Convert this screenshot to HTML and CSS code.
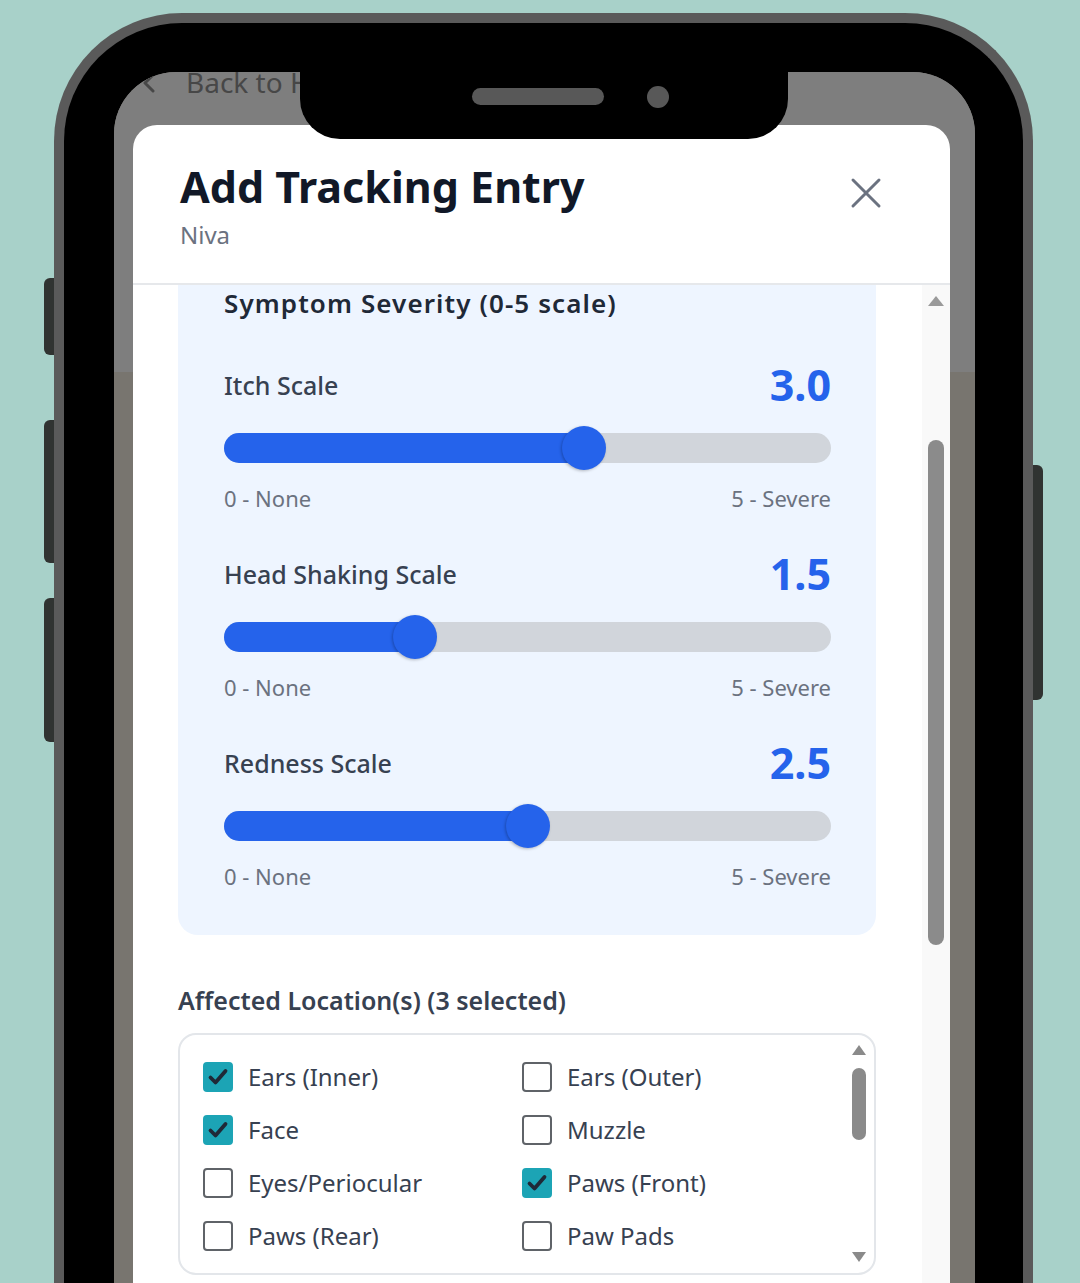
FILE: index.html
```html
<!DOCTYPE html>
<html lang="en">
<head>
<meta charset="utf-8">
<title>Add Tracking Entry</title>
<link rel="stylesheet" href="styles.css">
</head>
<body>
<div class="phone">
  <span class="side-btn left b1"></span>
  <span class="side-btn left b2"></span>
  <span class="side-btn left b3"></span>
  <span class="side-btn right b4"></span>
  <div class="screen">
    <div class="bg-page">
      <div class="bg-head">
        <div class="back">
          <svg class="chev" width="16" height="22" viewBox="0 0 16 22"><polyline points="12,3 4,11 12,19" fill="none" stroke="#474747" stroke-width="3" stroke-linecap="round" stroke-linejoin="round"/></svg>
          <span>Back to Home</span>
        </div>
      </div>
      <div class="bg-rest"></div>
    </div>

    <div class="modal">
      <header class="modal-head">
        <div class="head-text">
          <h1>Add Tracking Entry</h1>
          <p>Niva</p>
        </div>
        <button class="close" aria-label="Close">
          <svg width="36" height="36" viewBox="0 0 36 36"><path d="M5 5 L31 31 M31 5 L5 31" stroke="#6b7280" stroke-width="3" stroke-linecap="round" fill="none"/></svg>
        </button>
      </header>
      <div class="modal-body">
        <div class="content">
          <section class="severity">
            <h2>Symptom Severity (0-5 scale)</h2>
            <div class="sliders">
              <div class="slider">
                <div class="row"><span class="label">Itch Scale</span><span class="val">3.0</span></div>
                <div class="range" style="--v:0.6"><div class="track"><div class="fill"></div></div><span class="thumb"></span></div>
                <div class="ends"><span>0 - None</span><span>5 - Severe</span></div>
              </div>
              <div class="slider">
                <div class="row"><span class="label">Head Shaking Scale</span><span class="val">1.5</span></div>
                <div class="range" style="--v:0.3"><div class="track"><div class="fill"></div></div><span class="thumb"></span></div>
                <div class="ends"><span>0 - None</span><span>5 - Severe</span></div>
              </div>
              <div class="slider">
                <div class="row"><span class="label">Redness Scale</span><span class="val">2.5</span></div>
                <div class="range" style="--v:0.5"><div class="track"><div class="fill"></div></div><span class="thumb"></span></div>
                <div class="ends"><span>0 - None</span><span>5 - Severe</span></div>
              </div>
            </div>
          </section>

          <h3 class="loc-title">Affected Location(s) (3 selected)</h3>
          <div class="loc-box">
            <div class="loc-grid">
              <label class="opt"><span class="cb on"><svg width="30" height="30" viewBox="0 0 30 30"><path d="M7.5 15.5 L12.5 20.5 L22.5 9" fill="none" stroke="#1f2937" stroke-width="3.8" stroke-linecap="round" stroke-linejoin="round"/></svg></span>Ears (Inner)</label>
              <label class="opt"><span class="cb"></span>Ears (Outer)</label>
              <label class="opt"><span class="cb on"><svg width="30" height="30" viewBox="0 0 30 30"><path d="M7.5 15.5 L12.5 20.5 L22.5 9" fill="none" stroke="#1f2937" stroke-width="3.8" stroke-linecap="round" stroke-linejoin="round"/></svg></span>Face</label>
              <label class="opt"><span class="cb"></span>Muzzle</label>
              <label class="opt"><span class="cb"></span>Eyes/Periocular</label>
              <label class="opt"><span class="cb on"><svg width="30" height="30" viewBox="0 0 30 30"><path d="M7.5 15.5 L12.5 20.5 L22.5 9" fill="none" stroke="#1f2937" stroke-width="3.8" stroke-linecap="round" stroke-linejoin="round"/></svg></span>Paws (Front)</label>
              <label class="opt"><span class="cb"></span>Paws (Rear)</label>
              <label class="opt"><span class="cb"></span>Paw Pads</label>
            </div>
            <div class="mini-scroll">
              <span class="arr up"></span>
              <span class="mini-thumb"></span>
              <span class="arr down"></span>
            </div>
          </div>
        </div>
        <div class="scrollbar">
          <span class="arr up"></span>
          <span class="sb-thumb"></span>
        </div>
      </div>
    </div>

    <div class="notch"><span class="speaker"></span><span class="camera"></span></div>
  </div>
</div>
</body>
</html>
```
FILE: styles.css
```css
* { box-sizing: border-box; margin: 0; padding: 0; }
html, body { width: 1080px; height: 1283px; overflow: hidden; }
body {
  background: #a8d1c9;
  font-family: "Noto Sans", "Open Sans", sans-serif;
}

/* phone frame */
.phone {
  position: relative;
  margin: 13px 0 0 54px;
  width: 979px;
  height: 1400px;
  background: #000;
  border: 10px solid #5a5a5a;
  border-bottom: none;
  border-radius: 128px 128px 0 0;
  padding: 49px 48px 0 50px;
}
.side-btn { position: absolute; background: #303331; width: 10px; }
.side-btn.left { left: -20px; border-radius: 6px 0 0 6px; }
.side-btn.right { left: 969px; border-radius: 0 6px 6px 0; }
.b1 { top: 255px; height: 77px; }
.b2 { top: 397px; height: 143px; }
.b3 { top: 575px; height: 144px; }
.b4 { top: 442px; height: 235px; }

.screen {
  position: relative;
  height: 100%;
  border-radius: 62px 62px 0 0;
  overflow: hidden;
  background: #7a7773;
}

/* dimmed page behind the modal */
.bg-page { display: flex; flex-direction: column; height: 100%; }
.bg-head { height: 300px; background: #7e7e7e; }
.bg-rest { flex: 1; background: #78756f; }
.back {
  display: flex;
  align-items: center;
  padding-left: 27px;
  font-size: 28px;
  line-height: 20px;
  height: 20px;
  color: #474747;
  white-space: nowrap;
}
.chev { margin-right: 29px; margin-top: 2px; }

.notch {
  position: absolute;
  z-index: 2;
  left: 186px;
  top: 0;
  width: 488px;
  height: 67px;
  background: #000;
  border-radius: 0 0 40px 40px;
}
.speaker {
  position: absolute;
  left: 172px; top: 16px;
  width: 132px; height: 17px;
  border-radius: 9px;
  background: #585858;
}
.camera {
  position: absolute;
  left: 347px; top: 14px;
  width: 22px; height: 22px;
  border-radius: 50%;
  background: #585858;
}

/* modal */
.modal {
  position: absolute;
  left: 19px;
  top: 53px;
  width: 817px;
  bottom: 0;
  background: #fff;
  border-radius: 24px 24px 0 0;
  display: flex;
  flex-direction: column;
}
.modal-head {
  display: flex;
  justify-content: space-between;
  align-items: flex-start;
  padding: 38px 66px 33px 47px;
  border-bottom: 2px solid #e6e8eb;
}
.modal-head h1 {
  font-size: 43px;
  line-height: 48px;
  font-weight: 700;
  color: #111827;
}
.modal-head p {
  margin-top: 9px;
  font-size: 24px;
  line-height: 30px;
  color: #6b7280;
}
.close {
  margin-top: 12px;
  width: 36px;
  height: 36px;
  border: none;
  background: none;
  display: block;
}
.close svg { display: block; }

.modal-body {
  flex: 1;
  display: flex;
  overflow: hidden;
}
.content {
  margin-left: 45px;
  margin-top: -30px;
  width: 698px;
  flex: none;
}
.scrollbar {
  margin-left: auto;
  width: 28px;
  background: #f9f9f9;
  display: flex;
  flex-direction: column;
  align-items: center;
  padding-top: 11px;
}
.arr { width: 0; height: 0; border-left: 8px solid transparent; border-right: 8px solid transparent; }
.arr.up { border-bottom: 10px solid #9a9a9a; }
.arr.down { border-top: 10px solid #9a9a9a; }
.sb-thumb {
  margin-top: 134px;
  width: 16px;
  height: 505px;
  border-radius: 8px;
  background: #8b8b8b;
}

/* severity */
.severity {
  background: #eef5ff;
  border-radius: 20px;
  padding: 30px 45px 45px 46px;
}
.severity h2 {
  font-size: 26px;
  line-height: 36px;
  font-weight: 600;
  letter-spacing: 1.1px;
  color: #1f2937;
}
.sliders {
  margin-top: 42px;
  display: flex;
  flex-direction: column;
  gap: 40px;
}
.row {
  display: flex;
  justify-content: space-between;
  align-items: center;
  height: 44px;
}
.label {
  font-size: 25px;
  line-height: 30px;
  font-weight: 500;
  color: #374151;
}
.val {
  font-size: 43px;
  line-height: 44px;
  font-weight: 700;
  color: #2563eb;
}
.range {
  position: relative;
  height: 44px;
  margin-top: 19px;
}
.track {
  position: absolute;
  left: 0; right: 0; top: 7px;
  height: 30px;
  border-radius: 15px;
  background: #d1d5db;
  overflow: hidden;
}
.fill {
  height: 100%;
  width: calc(var(--v) * (100% - 44px) + 22px);
  background: #2563eb;
}
.thumb {
  position: absolute;
  top: 0;
  left: calc(var(--v) * (100% - 44px));
  width: 44px;
  height: 44px;
  border-radius: 50%;
  background: #2563eb;
  box-shadow: -1px 1px 3px rgba(0, 0, 0, 0.25);
}
.ends {
  display: flex;
  justify-content: space-between;
  margin-top: 14px;
  font-size: 22px;
  line-height: 28px;
  color: #6b7280;
}

/* locations */
.loc-title {
  margin-top: 50px;
  font-size: 25px;
  line-height: 30px;
  font-weight: 600;
  color: #374151;
}
.loc-box {
  position: relative;
  margin-top: 18px;
  height: 242px;
  border: 2px solid #e3e6ea;
  border-radius: 18px;
  padding: 27px 0 0 23px;
}
.loc-grid {
  display: grid;
  grid-template-columns: 319px 1fr;
  grid-auto-rows: 30px;
  row-gap: 23px;
}
.opt {
  display: flex;
  align-items: center;
  gap: 15px;
  font-size: 24px;
  line-height: 30px;
  color: #374151;
}
.cb {
  flex: none;
  width: 30px;
  height: 30px;
  border: 2px solid #5f6368;
  border-radius: 4px;
  background: #fff;
  position: relative;
}
.cb.on { background: #1ca4b5; border-color: #1ca4b5; }
.cb svg { position: absolute; left: -2px; top: -2px; }

.mini-scroll {
  position: absolute;
  right: 5px;
  top: 10px;
  bottom: 11px;
  width: 20px;
  display: flex;
  flex-direction: column;
  align-items: center;
}
.mini-scroll .arr { border-left-width: 7px; border-right-width: 7px; }
.mini-scroll .arr.up { border-bottom: 10px solid #8a8a8a; }
.mini-scroll .arr.down { margin-top: auto; border-top: 10px solid #8a8a8a; }
.mini-thumb {
  margin-top: 13px;
  width: 14px;
  height: 72px;
  border-radius: 7px;
  background: #8a8a8a;
}
```
